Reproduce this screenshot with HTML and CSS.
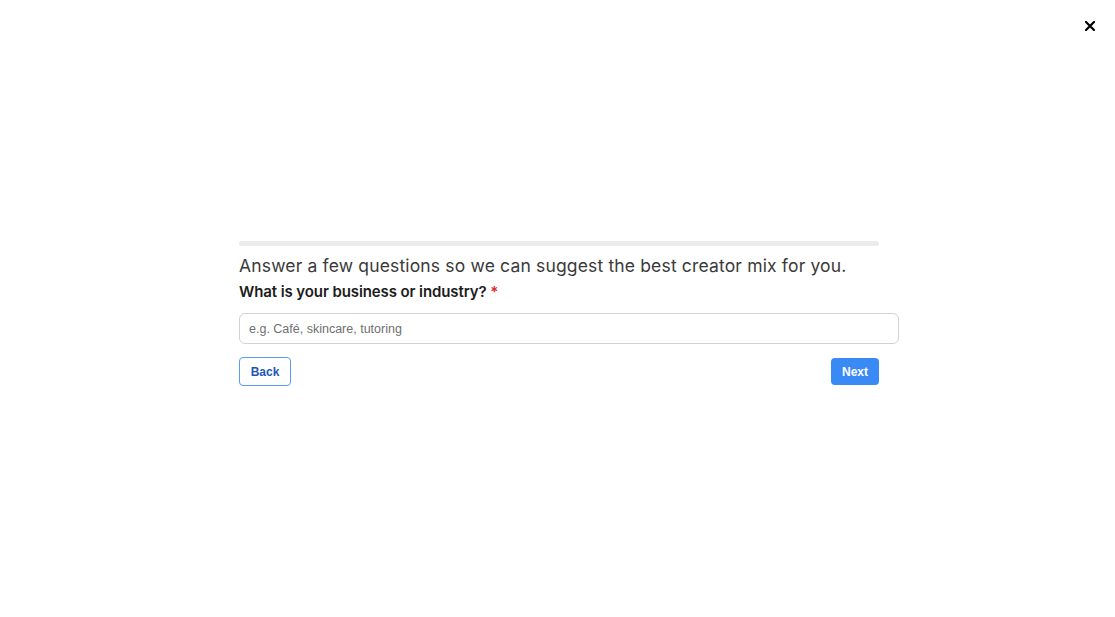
FILE: index.html
```html
<!DOCTYPE html>
<html lang="en">
<head>
<meta charset="utf-8">
<title>Questionnaire</title>
<link rel="stylesheet" href="styles.css">
</head>
<body>
<button class="close" aria-label="Close">
  <svg width="10" height="10" viewBox="0 0 10 10"><path d="M1 1L9 9M9 1L1 9" stroke="#000" stroke-width="2.2" stroke-linecap="square"/></svg>
</button>
<main class="page">
  <section class="wizard">
    <div class="progress"><div class="progress-fill" style="width:0%"></div></div>
    <h1 class="intro">Answer a few questions so we can suggest the best creator mix for you.</h1>
    <label class="question" for="industry">What is your business or industry? <span class="req">*</span></label>
    <input id="industry" class="field" type="text" placeholder="e.g. Café, skincare, tutoring">
    <div class="actions">
      <button class="btn btn-back">Back</button>
      <button class="btn btn-next">Next</button>
    </div>
  </section>
</main>
</body>
</html>
```
FILE: styles.css
```css
html, body {
  margin: 0;
  padding: 0;
  background: #fff;
}
body {
  font-family: "Inter", "Liberation Sans", sans-serif;
  width: 1115px;
  height: 617px;
  overflow: hidden;
  position: relative;
}
.close {
  position: absolute;
  top: 20px;
  right: 19px;
  width: 12px;
  height: 12px;
  padding: 0;
  border: 0;
  background: none;
  display: flex;
  align-items: center;
  justify-content: center;
}
.page {
  display: flex;
  justify-content: flex-start;
  padding-top: 241px;
  padding-left: 239px;
}
.wizard {
  width: 640px;
  display: flex;
  flex-direction: column;
}
.progress {
  height: 5px;
  border-radius: 3px;
  background: #ebebeb;
  overflow: hidden;
}
.progress-fill {
  height: 100%;
  background: #3b8bf6;
}
.intro {
  margin: 9px 0 0;
  font-size: 17.5px;
  font-weight: 400;
  line-height: 22px;
  color: #3a3a3a;
  letter-spacing: 0.16px;
}
.question {
  margin-top: 5px;
  font-size: 15px;
  font-weight: 600;
  line-height: 20px;
  color: #1c1c1c;
  letter-spacing: -0.1px;
}
.req {
  color: #e0262b;
}
.field {
  margin-top: 11px;
  width: 100%;
  box-sizing: content-box;
  padding: 0 9px;
  height: 29px;
  border: 1px solid #d2d2d2;
  border-radius: 6px;
  font-family: "Liberation Sans", Arial, sans-serif;
  font-size: 12.5px;
  color: #333;
  outline: none;
}
.field::placeholder {
  color: #707070;
}
.actions {
  margin-top: 13px;
  display: flex;
  justify-content: space-between;
  align-items: center;
}
.btn {
  font-family: "Liberation Sans", Arial, sans-serif;
  font-size: 12px;
  font-weight: 700;
  border-radius: 4px;
  cursor: pointer;
}
.btn-back {
  width: 52px;
  height: 29px;
  background: #fff;
  border: 1px solid #5a9cf5;
  color: #1f55b8;
}
.btn-next {
  width: 48px;
  height: 27px;
  background: #3a8af6;
  border: 0;
  color: #fff;
}
```
